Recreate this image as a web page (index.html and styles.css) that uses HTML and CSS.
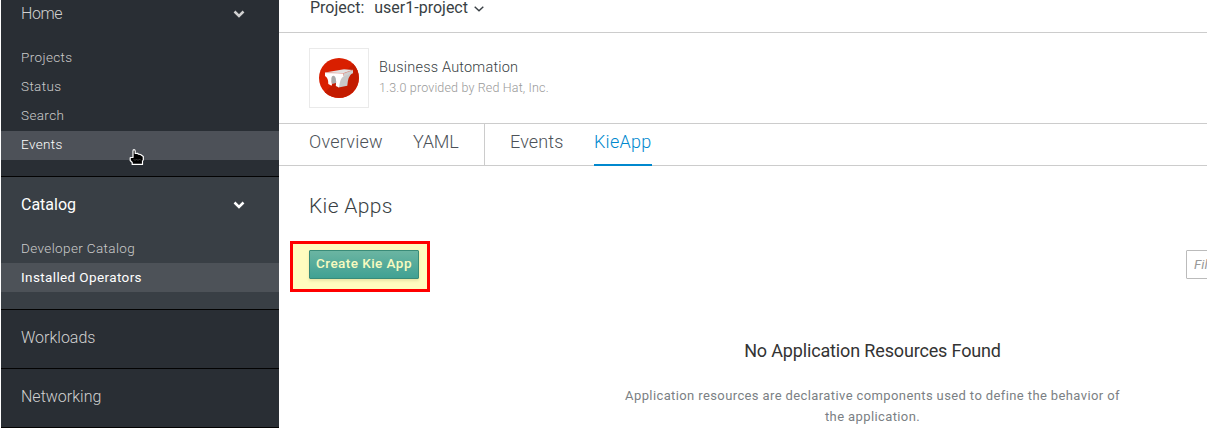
FILE: index.html
```html
<!DOCTYPE html>
<html lang="en">
<head>
<meta charset="utf-8">
<title>Business Automation</title>
<link rel="stylesheet" href="styles.css">
</head>
<body>
<div class="app">
  <nav class="sidebar">
    <section class="group group-home">
      <div class="group-title">Home
        <svg class="chevron" width="12" height="8" viewBox="0 0 12 8"><path d="M1.500 1.500 6 6 10.500 1.500" fill="none" stroke="currentColor" stroke-width="2.500"/></svg>
      </div>
      <a class="item">Projects</a>
      <a class="item">Status</a>
      <a class="item">Search</a>
      <a class="item hovered">Events</a>
    </section>
    <section class="group group-catalog">
      <div class="group-title">Catalog
        <svg class="chevron" width="12" height="8" viewBox="0 0 12 8"><path d="M1.500 1.500 6 6 10.500 1.500" fill="none" stroke="currentColor" stroke-width="2.500"/></svg>
      </div>
      <a class="item">Developer Catalog</a>
      <a class="item current">Installed Operators</a>
    </section>
    <section class="group closed"><div class="group-title">Workloads</div></section>
    <section class="group closed"><div class="group-title">Networking</div></section>
  </nav>
  <main class="content">
    <header class="project-bar">
      <span>Project:</span><span>user1-project</span>
      <svg width="10" height="6" viewBox="0 0 10 6"><path d="M.7.7 5 4.8 9.300.7" fill="none" stroke="currentColor" stroke-width="1.400"/></svg>
    </header>
    <div class="operator">
      <div class="logo">
        <svg width="40" height="40" viewBox="0 0 40 40">
          <circle cx="20" cy="20" r="20" fill="#d91f00"/>
          <path d="M5.860 34.140 34.140 5.860A20 20 0 0 1 5.860 34.140Z" fill="#c31b00"/>
          <path d="M11 19.500Q14 15.500 17 18.500V25L13 26Z" fill="#aaa"/>
          <path d="M20.500 20Q23 16 28 16.500L33.500 15Q28.800 18 28.300 27.700L19.500 29.500Z" fill="#c8c8c8"/>
          <path d="M6 14.600 25 11.200 34 12 24.500 15.300Z" fill="#e2e2e2"/>
          <path d="M24.500 15.300 34 12V15.200L24.500 18.500Z" fill="#d0d0d0"/>
          <path d="M6 14.600 24.500 15.300V18.500Q21 20 20 29.500L16.800 28Q18 18 14.500 17.800 11 18 13 26.500L12.500 27.800 9.300 26Q9.500 20 6 18Z" fill="#fff"/>
          <path d="M6 14.600 24.500 15.500 34 12M24.500 15.500V18" fill="none" stroke="#e09a90" stroke-width=".5"/>
        </svg>
      </div>
      <div class="operator-text">
        <div class="operator-name">Business Automation</div>
        <div class="operator-meta">1.3.0 provided by Red Hat, Inc.</div>
      </div>
    </div>
    <div class="tabs">
      <a class="tab overview">Overview</a>
      <a class="tab yaml">YAML</a>
      <span class="divider"></span>
      <a class="tab events">Events</a>
      <a class="tab active">KieApp</a>
    </div>
    <h1 class="page-title">Kie Apps</h1>
    <div class="toolbar">
      <div class="highlight"><button class="create">Create Kie App</button></div>
      <input class="filter" placeholder="Filter by name...">
    </div>
    <div class="empty">
      <div class="empty-title">No Application Resources Found</div>
      <div class="empty-text">Application resources are declarative components used to define the behavior of<br>the application.</div>
    </div>
  </main>
</div>
<svg class="pointer" width="17" height="18" viewBox="0 0 17 18">
  <path d="M5 9.500V3Q5 1.600 6 1.600T7.200 3V5.500L9.500 5.300 10.500 6.200 12.500 6.500 15.300 8.500V12L14.500 13V16.400H4.200V14.500L2.200 12.500V9.800L3 9.500Z" fill="#000" stroke="#fff" stroke-width="1.200" stroke-linejoin="round"/>
  <path d="M5.500 11 7 12.500 8.500 11 10 12.500 11.500 11 13 12.500" fill="none" stroke="#555" stroke-width=".7"/>
</svg>
</body>
</html>
```
FILE: styles.css
```css
* { box-sizing: border-box; }
body {
  margin: 0;
  height: 428px;
  overflow: hidden;
  background: #fff;
  color: #393f44;
  font-family: Roboto, "Liberation Sans", sans-serif;
  font-weight: 300;
}
.app { display: flex; height: 428px; padding-left: 1px; }

.sidebar { width: 278px; flex: none; background: #292e34; color: #d1d1d1; }
.group { border-bottom: 1px solid #030303; }
.group-home { height: 177px; }
.group-catalog { height: 133px; background: #393f45; }
.closed { height: 59px; }
.group-title {
  display: flex;
  justify-content: space-between;
  align-items: center;
  height: 27px;
  padding: 0 34px 0 20px;
  font-size: 16px;
}
.group-home .group-title { margin-bottom: 17px; letter-spacing: -.4px; }
.group-catalog .group-title { height: 55px; margin-bottom: 2px; color: #fff; font-weight: 400; }
.closed .group-title { height: 55px; }
.item {
  display: block;
  height: 29px;
  padding-left: 20px;
  line-height: 27px;
  font-size: 13.5px;
  letter-spacing: .38px;
  color: #cbcbcb;
}
.group-catalog .item { line-height: 28px; }
.hovered { background: #4d5158; color: #fff; }
.group-catalog .current { background: #4d5258; color: #fff; font-weight: 400; }

.content { flex: 1; min-width: 0; overflow: hidden; }
.project-bar {
  display: flex;
  align-items: center;
  gap: 10px;
  height: 33px;
  padding: 0 0 17px 31px;
  border-bottom: 1px solid #ccc;
  font-size: 16px;
  line-height: 15px;
  font-weight: 400;
  color: #393f44;
}
.project-bar svg { margin: 2px 0 0 -4px; }
.operator { display: flex; gap: 10px; height: 91px; padding: 15px 30px; border-bottom: 1px solid #ccc; }
.logo { width: 60px; height: 60px; padding: 9px; border: 1px solid #eaeaea; }
.logo svg { display: block; }
.operator-text { padding-top: 8px; }
.operator-name { padding-top: 1px; font-size: 14.5px; line-height: 22px; letter-spacing: .2px; }
.operator-meta { margin-top: -1px; font-size: 12.5px; line-height: 20px; letter-spacing: .16px; color: #999; }

.tabs { display: flex; height: 42px; padding-left: 30px; border-bottom: 1px solid #ccc; font-size: 18px; color: #4d5258; }
.tab { height: 42px; line-height: 36px; }
.overview { width: 104px; letter-spacing: .25px; }
.yaml { width: 71px; letter-spacing: -.2px; }
.divider { width: 1px; margin-right: 25px; background: #ccc; }
.events { width: 84px; letter-spacing: .15px; }
.active { width: 58px; border-bottom: 2px solid #0088ce; color: #0088ce; letter-spacing: .25px; }

.page-title { margin: 24px 0 0 30px; height: 32px; font-size: 21px; line-height: 32px; font-weight: 300; letter-spacing: .35px; }
.toolbar { display: flex; justify-content: space-between; padding: 19px 0 0 11px; height: 70px; }
.highlight { width: 140px; height: 51px; padding: 6px 0 0 16px; border: 3px solid #f00; background: #fffcbf; }
.create {
  display: block;
  width: 110px;
  height: 29px;
  padding: 0 0 3px;
  border: 1px solid #398b78;
  border-radius: 1px;
  background: linear-gradient(#6bb5a2, #40a193);
  box-shadow: 0 2px 3px rgba(90, 80, 0, .13);
  color: #f8fbc0;
  font: 500 13.5px Roboto, sans-serif;
  letter-spacing: .45px;
  white-space: nowrap;
}
.filter {
  width: 160px;
  height: 29px;
  flex: none;
  margin: 9px -139px 0 0;
  padding: 0 7px 2px;
  border: 1px solid #bbb;
  border-radius: 1px;
  font: italic 400 13.5px Roboto, sans-serif;
}
.filter::placeholder { color: #999; }

.empty { width: 929px; padding: 46px 0 0 258px; text-align: center; }
.empty-title { font-size: 18px; line-height: 26px; letter-spacing: -.15px; color: #333; font-weight: 400; }
.empty-text { margin-top: 21px; font-size: 13px; line-height: 21px; letter-spacing: .39px; color: #7b7f84; font-weight: 400; white-space: nowrap; }

.pointer { position: absolute; left: 128px; top: 148px; }
```
